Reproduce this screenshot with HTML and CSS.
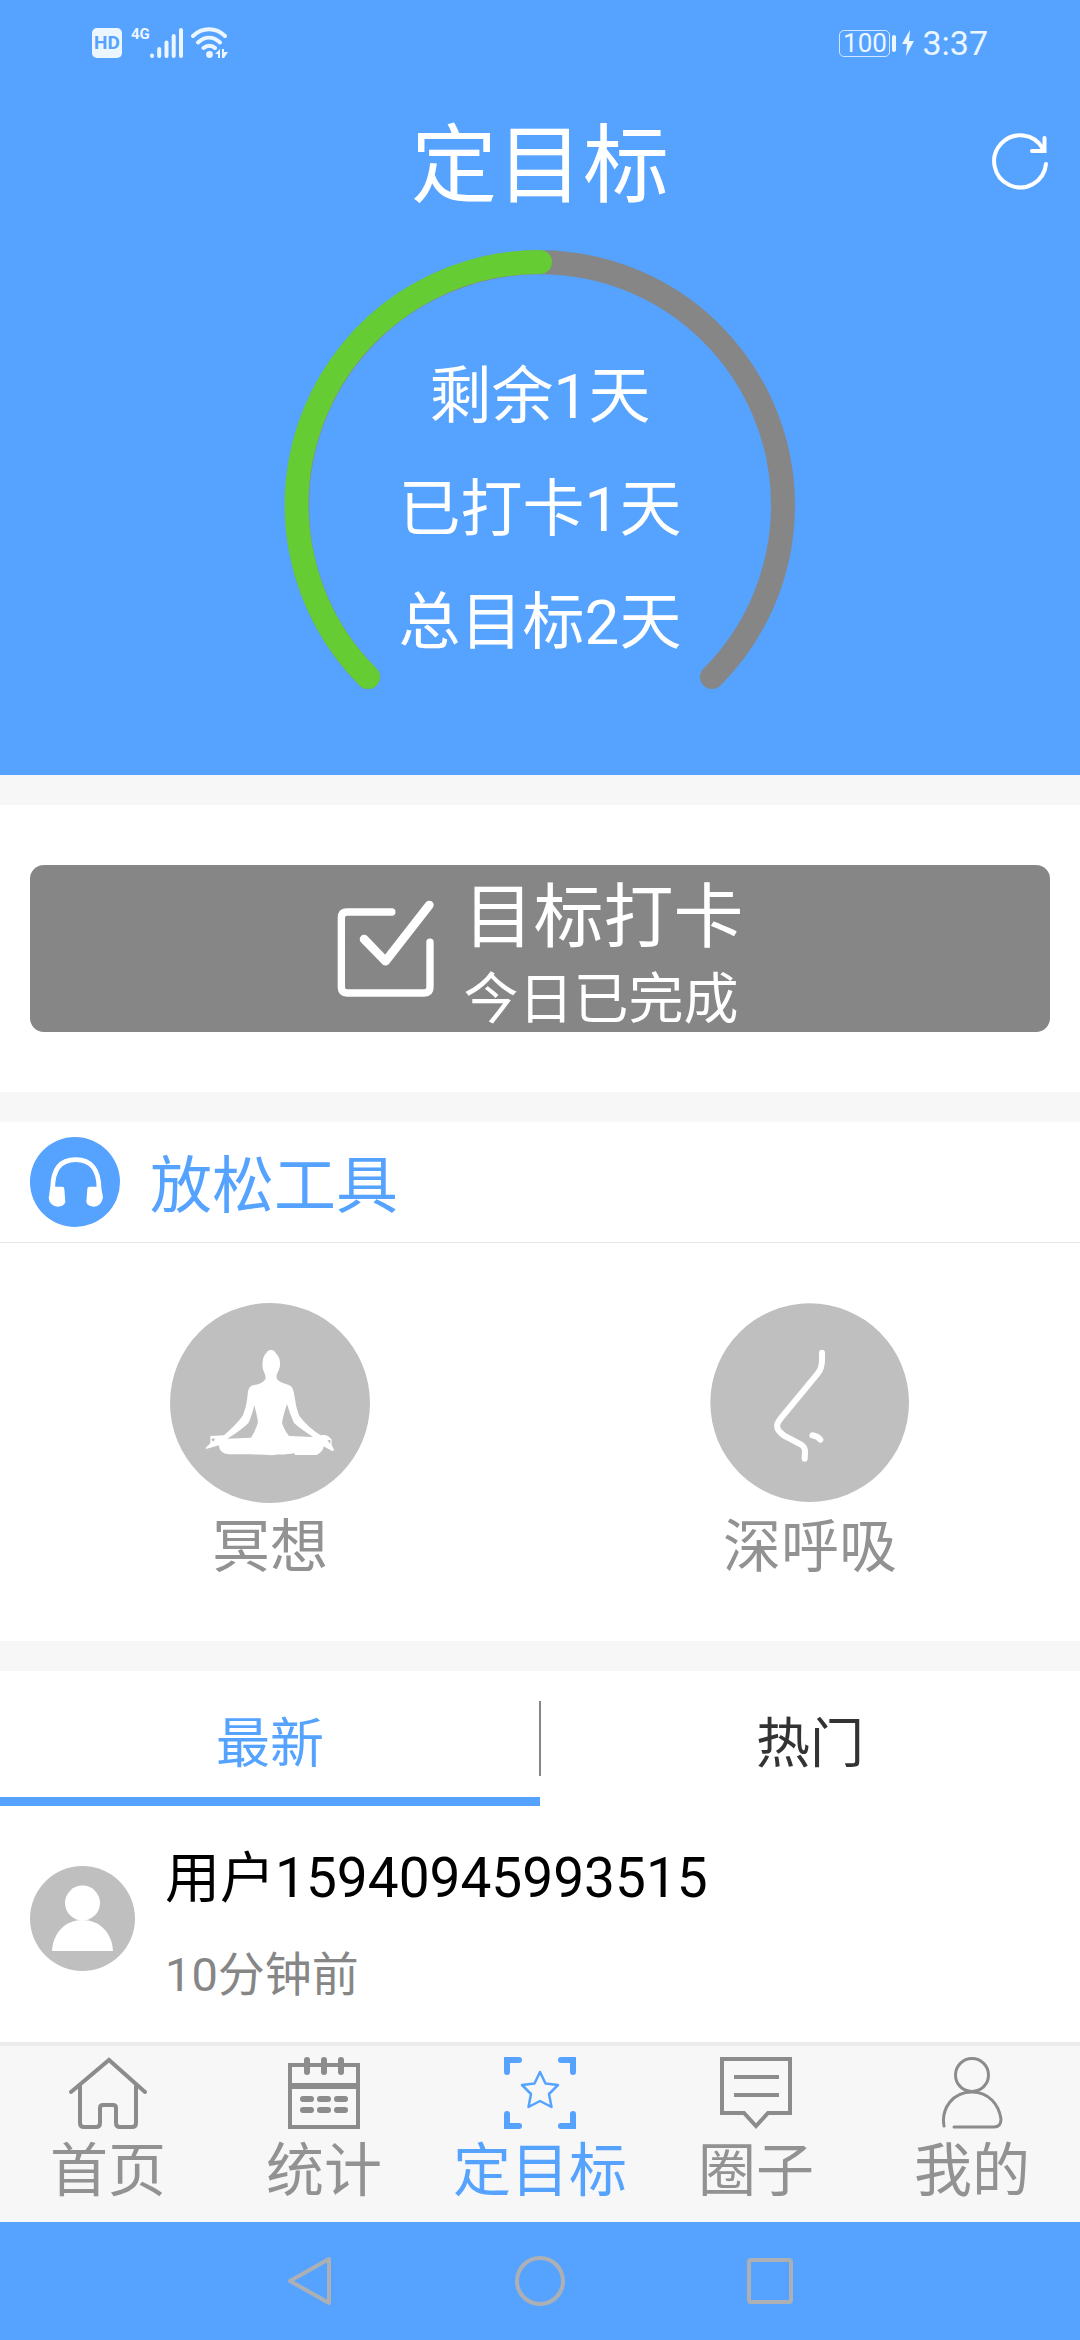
FILE: index.html
```html
<!DOCTYPE html>
<html lang="zh-CN">
<head>
<meta charset="utf-8">
<meta name="viewport" content="width=device-width, initial-scale=1">
<title>定目标</title>
<link rel="stylesheet" href="styles.css">
</head>
<body>
<div class="app">
  <header class="hero">
    <div class="status">
      <div class="status-side">
        <span class="hd">HD</span>
        <span class="net">4G</span>
        <svg class="signal" width="34" height="32" viewBox="0 0 34 32" fill="none" stroke="#ebf6ff" stroke-width="4" stroke-linecap="round"><path d="M2 28.500v.500M9.200 22v7M16.500 15.500v13.500M23.700 9v20M31 3v26"/></svg>
        <svg class="wifi" width="38" height="32" viewBox="0 0 38 32"><g fill="none" stroke="#ebf6ff" stroke-width="4" stroke-linecap="round"><path d="M2 9C11 0 25 0 34 9M7 15.500C14 9 22 9 29 15.500M12.500 21C16 18 21 18 24 21"/></g><g fill="#ebf6ff"><circle cx="18.500" cy="27.500" r="3.400"/><path d="M24 27l5-5v9h-2v-4zM31 22v9h2l4-6h-4v-3z"/></g></svg>
      </div>
      <div class="status-side">
        <span class="battery">100</span>
        <span class="nub"></span>
        <svg class="bolt" width="12" height="26" viewBox="0 0 12 26" fill="#ebf6ff"><path d="M8 0L0 14h5L4 26l8-15H7z"/></svg>
        <span class="clock">3:37</span>
      </div>
    </div>
    <div class="titlebar">
      <h1>定目标</h1>
      <button class="refresh" type="button" aria-label="刷新">
        <svg width="60" height="60" viewBox="0 0 60 60" fill="none" stroke="#fff" stroke-width="4" stroke-linecap="round"><path d="M56 32A26 26 0 1 1 53 17M54.500 6v13H42"/></svg>
      </button>
    </div>
    <div class="ring">
      <svg viewBox="0 0 512 512" fill="none" stroke-width="24" stroke-linecap="round"><path stroke="#868686" d="M84 428A243 243 0 1 1 428 428"/><path stroke="#66cc33" d="M84 428A243 243 0 0 1 256 13"/></svg>
      <div class="ring-text">
        <p>剩余1天</p>
        <p>已打卡1天</p>
        <p>总目标2天</p>
      </div>
    </div>
  </header>

  <main>
    <section class="card checkin">
      <button class="checkin-button" type="button">
        <svg width="97" height="97" viewBox="110 148 290 290" fill="none" stroke="#fff" stroke-linecap="round" stroke-linejoin="round"><path stroke-width="22" d="M274 184H140Q123 184 123 201V409Q123 426 140 426H371Q388 426 388 409V274"/><path stroke-width="26" d="M191 265L255 331L386 163"/></svg>
        <span class="checkin-text">
          <span class="checkin-title">目标打卡</span>
          <span class="checkin-sub">今日已完成</span>
        </span>
      </button>
    </section>

    <section class="card">
      <h2 class="section-head">
        <svg width="90" height="90" viewBox="90 171 270 270"><circle cx="225" cy="306" r="135" fill="#55a3ff"/><path fill="none" stroke="#fff" stroke-width="14" d="M158 326C158 270 180 239 227 239S297 270 297 326"/><path fill="#fff" d="M151 320H186Q193 320 193 327L196 367Q190 380 174 380Q150 380 146 355ZM303 320H268Q262 320 262 327L259 367Q264 380 282 380Q304 380 309 352Z"/></svg>
        <span class="section-title">放松工具</span>
      </h2>
      <div class="tools">
        <a class="tool" href="#meditation">
          <svg width="200" height="200" viewBox="60 39 600 600"><circle cx="360" cy="339" r="300" fill="#bfbfbf"/><path fill="#fff" fill-rule="evenodd" d="M363 180C370 180 376 184 378 191C387 198 391 210 390 225C389 237 385 243 382 250C378 258 379 265 383 269C392 278 405 281 416 285C426 289 429 296 431 306C436 328 437 352 448 378C466 402 490 422 512 436C526 432 538 438 545 449V465L553 481L546 483L521 469C521 480 511 489 501 495L435 495L433 490C412 495 390 492 365 496C345 493 300 493 240 493C221 493 207 484 207 466L168 477L167 473L181 460V438L222 436C242 418 263 399 278 377C290 350 291 328 294 305C296 293 302 286 313 285C324 284 337 279 345 269C349 264 346 255 343 248C338 238 336 226 338 215C339 203 343 194 349 190C351 184 355 180 363 180ZM313 346C309 363 303 383 296 398C276 418 250 434 232 446L303 443C311 431 319 414 324 397C323 383 317 363 313 346ZM411 342C404 362 399 381 396 398C400 412 408 427 417 438L489 441C468 427 448 413 432 399C425 382 417 363 411 342ZM184 449L190 455L195 448L189 444ZM532 451L541 463V450Z"/></svg>
          冥想
        </a>
        <a class="tool" href="#breath">
          <svg width="200" height="200" viewBox="90 39 600 600"><circle cx="389" cy="338" r="298" fill="#bfbfbf"/><path fill="none" stroke="#fff" stroke-width="18" stroke-linecap="round" d="M426 188V210Q426 235 413 251L303 384C283 408 290 421 314 438L362 463Q376 472 375 486L374 506M397 436Q412 438 421 449"/></svg>
          深呼吸
        </a>
      </div>
    </section>

    <section class="card feed">
      <div class="tabs">
        <button class="tab active" type="button">最新</button>
        <button class="tab" type="button">热门</button>
      </div>
      <article class="post">
        <svg width="105" height="105" viewBox="0 0 105 105"><circle cx="52.500" cy="52.500" r="52.500" fill="#bfbfbf"/><g fill="#fff"><circle cx="52.500" cy="37" r="17.500"/><path d="M22 85C23 66 36 54 52.500 54S82 66 83 85Z"/></g></svg>
        <div>
          <p class="name">用户15940945993515</p>
          <p class="time">10分钟前</p>
        </div>
      </article>
    </section>
  </main>

  <nav class="nav">
    <a href="#home"><svg width="78" height="72" viewBox="0 0 78 72" fill="none" stroke="#8c8c8c" stroke-width="4" stroke-linecap="round"><path d="M2 35L40 3L76 35M11 29V66Q11 70 15 70H27Q31 70 31 66V51Q31 48 34 48H44Q47 48 47 51V66Q47 70 51 70H63Q67 70 67 66V29"/></svg>首页</a>
    <a href="#stats"><svg width="72" height="72" viewBox="0 0 72 72" fill="none" stroke="#8c8c8c"><path stroke-width="4" d="M2 8H70V70H2Z"/><path stroke-width="6" d="M2 29H70"/><path stroke-width="6" stroke-linecap="round" d="M19 3V15M36 3V15M53 3V15M15 42H23M32 42H40M49 42H57M15 53H23M32 53H40M49 53H57"/></svg>统计</a>
    <a class="current" href="#goal"><svg width="72" height="72" viewBox="0 0 72 72" fill="none" stroke="#55a3ff"><path stroke-width="6" stroke-linecap="round" d="M3 15V3H15M57 3H69V15M69 57V69H57M15 69H3V57"/><path stroke-width="2.500" stroke-linejoin="round" d="M36 15L41.500 26.500L54 28L45 37L47.500 50L36 44L24.500 50L27 37L18 28L30.500 26.500Z"/></svg>定目标</a>
    <a href="#circle"><svg width="72" height="72" viewBox="0 0 72 72" fill="none" stroke="#8c8c8c" stroke-width="4"><path d="M2 2H70V56H48L36 69L24 56H2ZM14 20H59M14 38H59"/></svg>圈子</a>
    <a href="#me"><svg width="62" height="72" viewBox="0 0 62 72" fill="none" stroke="#8c8c8c" stroke-width="3" stroke-linecap="round"><circle cx="31" cy="18" r="16.500"/><path d="M3 69C0 51 12 35 31 35C48 35 58 48 60 62Q60 70 53 70H13"/></svg>我的</a>
  </nav>

  <footer class="system">
    <button type="button" aria-label="返回"><svg width="50" height="52" viewBox="0 0 50 52" fill="none" stroke="#acb0b5" stroke-width="4" stroke-linejoin="round"><path d="M44 4V48L5 26Z"/></svg></button>
    <button type="button" aria-label="主屏幕"><svg width="50" height="52" viewBox="0 0 50 52" fill="none" stroke="#acb0b5" stroke-width="4"><circle cx="25" cy="26" r="23"/></svg></button>
    <button type="button" aria-label="最近任务"><svg width="50" height="52" viewBox="0 0 50 52" fill="none" stroke="#acb0b5" stroke-width="4"><rect x="4" y="5" width="42" height="42" rx="2"/></svg></button>
  </footer>
</div>
</body>
</html>
```
FILE: styles.css
```css
* {
  box-sizing: border-box;
}

body {
  margin: 0;
  font-family: Roboto, "Noto Sans CJK SC", sans-serif;
  background: #f7f7f7;
}

h1,
h2,
p {
  margin: 0;
  font-weight: 400;
}

button {
  padding: 0;
  border: 0;
  background: none;
  font: inherit;
  color: inherit;
}

a {
  color: inherit;
  text-decoration: none;
}

svg {
  display: block;
  flex: none;
}

.app {
  display: flex;
  flex-direction: column;
  min-height: 100vh;
}

.hero {
  padding-bottom: 14px;
  background: #55a3ff;
  color: #fff;
}

.status {
  display: flex;
  justify-content: space-between;
  height: 86px;
  padding: 0 92px;
  color: #ebf6ff;
}

.status-side {
  display: flex;
  align-items: center;
}

.hd {
  width: 30px;
  border-radius: 5px;
  background: #ebf6ff;
  color: #55a3ff;
  font-size: 19px;
  font-weight: 700;
  line-height: 30px;
  text-align: center;
}

.net {
  margin-left: 9px;
  padding-bottom: 18px;
  font-size: 15px;
  font-weight: 700;
  line-height: 20px;
}

.wifi {
  margin-left: 7px;
}

.battery {
  width: 51px;
  border: 1px solid #d0e6ff;
  border-radius: 5px;
  font-size: 26px;
  line-height: 25px;
  text-align: center;
}

.nub {
  width: 4px;
  height: 17px;
  margin-left: 2px;
  border-radius: 2px;
  background: #ebf6ff;
}

.bolt {
  margin: 0 8px 0 6px;
}

.clock {
  font-size: 34px;
}

.titlebar {
  display: grid;
  grid-template-columns: 90px 1fr 90px;
  align-items: center;
  height: 151px;
}

.titlebar h1 {
  grid-column: 2;
  padding-top: 10px;
  font-size: 86px;
  line-height: 140px;
  text-align: center;
}

.ring {
  display: grid;
  width: 512px;
  margin: 12px auto 0;
}

.ring > * {
  grid-area: 1 / 1;
}

.ring-text {
  padding-top: 91px;
  font-size: 62px;
  line-height: 113px;
  text-align: center;
}

.card {
  margin-top: 30px;
  background: #fff;
}

.checkin {
  padding: 60px 30px;
}

.checkin-button {
  display: flex;
  align-items: center;
  justify-content: center;
  gap: 30px;
  width: 100%;
  height: 167px;
  border-radius: 14px;
  background: #868686;
  color: #fff;
}

.checkin-text {
  display: flex;
  flex-direction: column;
  padding-top: 8px;
  text-align: left;
}

.checkin-title {
  font-size: 70px;
  line-height: 92px;
}

.checkin-sub {
  font-size: 55px;
  line-height: 70px;
}

.section-head {
  display: flex;
  align-items: center;
  gap: 30px;
  padding: 15px 30px;
  border-bottom: 1px solid #e5e5e5;
  color: #55a3ff;
  font-size: 62px;
  line-height: 80px;
}

.section-title {
  padding-top: 10px;
}

.tools {
  display: grid;
  grid-template-columns: 1fr 1fr;
  padding: 60px 0 50px;
}

.tool {
  display: flex;
  flex-direction: column;
  align-items: center;
  color: #929292;
  font-size: 58px;
  line-height: 88px;
}

.tabs {
  display: grid;
  grid-template-columns: 1fr 1fr;
  background: linear-gradient(#868686, #868686) center 30px / 2px 75px no-repeat;
}

.tab {
  height: 135px;
  padding-top: 10px;
  border-bottom: 9px solid transparent;
  color: #333;
  font-size: 54px;
}

.tab.active {
  border-color: #55a3ff;
  color: #55a3ff;
}

.post {
  display: flex;
  align-items: center;
  gap: 30px;
  padding: 15px 30px 25px;
}

.name {
  color: #000;
  font-size: 55px;
  line-height: 114px;
}

.time {
  color: #868686;
  font-size: 47px;
  line-height: 80px;
}

main {
  flex: 1;
  display: flex;
  flex-direction: column;
}

.feed {
  flex: 1;
}

.nav {
  display: grid;
  grid-template-columns: repeat(5, 1fr);
  height: 180px;
  padding-top: 11px;
  border-top: 4px solid #ebebeb;
  background: #f7f7f7;
  color: #929292;
}

.nav a {
  display: flex;
  flex-direction: column;
  align-items: center;
  font-size: 58px;
  line-height: 84px;
}

.nav .current {
  color: #55a3ff;
}

.system {
  display: flex;
  align-items: center;
  justify-content: center;
  gap: 180px;
  height: 118px;
  background: #55a3ff;
}
```
